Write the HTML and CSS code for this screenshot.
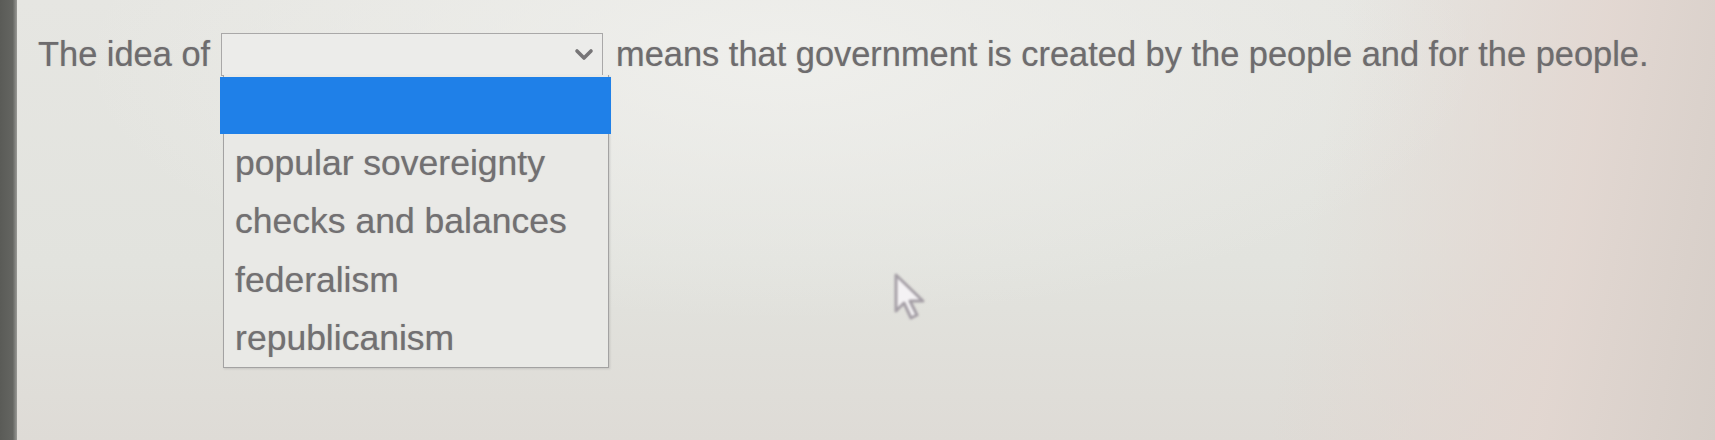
FILE: index.html
```html
<!DOCTYPE html>
<html lang="en">
<head>
<meta charset="utf-8">
<title>Question</title>
<link rel="stylesheet" href="styles.css">
</head>
<body>
<div class="screen">
  <div class="bezel"></div>
  <main class="page">
    <div class="question">
      <span class="phrase">The idea of</span>
      <div class="select-wrap">
        <div class="select">
          <svg class="chevron" width="20" height="13" viewBox="0 0 20 13"><path d="M3 3 L10 10 L17 3" fill="none" stroke="#777577" stroke-width="3.6" stroke-linecap="round" stroke-linejoin="round"/></svg>
        </div>
        <ul class="listbox">
          <li class="option selected"></li>
          <li class="option">popular sovereignty</li>
          <li class="option">checks and balances</li>
          <li class="option">federalism</li>
          <li class="option">republicanism</li>
        </ul>
      </div>
      <span class="phrase">means that government is created by the people and for the people.</span>
    </div>
    <svg class="cursor" width="34" height="48" viewBox="0 0 34 48"><path d="M3 2 L3 38 L11 30 L18 45 L24 42 L17 28 L30 28 Z" fill="#f4f2f4" stroke="#a59fa6" stroke-width="3" stroke-linejoin="round"/></svg>
  </main>
</div>
</body>
</html>
```

FILE: styles.css
```css
html, body {
  margin: 0;
  padding: 0;
}
body {
  width: 1715px;
  height: 440px;
  overflow: hidden;
  font-family: "Liberation Sans", Arial, sans-serif;
}
.screen {
  display: flex;
  width: 1715px;
  height: 440px;
  background:
    radial-gradient(ellipse 700px 260px at 780px 60px, rgba(240,240,237,0.9), rgba(240,240,237,0) 100%),
    linear-gradient(100deg, rgba(220,222,214,0) 0%, rgba(220,222,214,0) 75%, rgba(226,214,208,0.9) 90%, rgba(214,206,200,1) 100%),
    linear-gradient(180deg, #e6e6e2 0%, #e2e3de 60%, #dedbd6 100%);
}
.bezel {
  flex: 0 0 17px;
  background: linear-gradient(90deg, #5a5b57 0%, #646561 75%, #9a9a96 100%);
}
.page {
  position: relative;
  flex: 1;
  padding: 33px 0 0 21px;
}
.question {
  display: flex;
  align-items: center;
  gap: 11px;
  color: #6e6c6e;
  font-size: 34.4px;
  line-height: 43px;
}
.phrase {
  white-space: nowrap;
  text-shadow: 0 0 1px rgba(110,108,110,0.5);
}
.select-wrap {
  position: relative;
  margin: 0 2px 0 0;
}
.select {
  box-sizing: border-box;
  width: 382px;
  height: 43px;
  background: #ececea;
  border: 1.5px solid #a9a8a8;
  display: flex;
  align-items: center;
  justify-content: flex-end;
  padding-right: 8px;
}
.chevron {
  display: block;
}
.listbox {
  position: absolute;
  top: 42px;
  left: 2px;
  box-sizing: border-box;
  width: 386px;
  margin: 0;
  padding: 0;
  list-style: none;
  background: #e9e9e6;
  border: 1.5px solid #a3a2a2;
  border-top: 0;
  box-shadow: 1px 1px 2px rgba(120,120,120,0.25);
}
.option {
  height: 58.3px;
  line-height: 58.3px;
  padding-left: 11px;
  font-size: 35.5px;
  color: #727072;
  white-space: nowrap;
  text-shadow: 0 0 1px rgba(110,108,110,0.5);
}
.option.selected {
  height: 57px;
  margin: 2px -3px 0 -4px;
  background: #1f80e8;
}
.cursor {
  position: absolute;
  left: 876px;
  top: 273px;
  filter: blur(0.8px);
}
```
